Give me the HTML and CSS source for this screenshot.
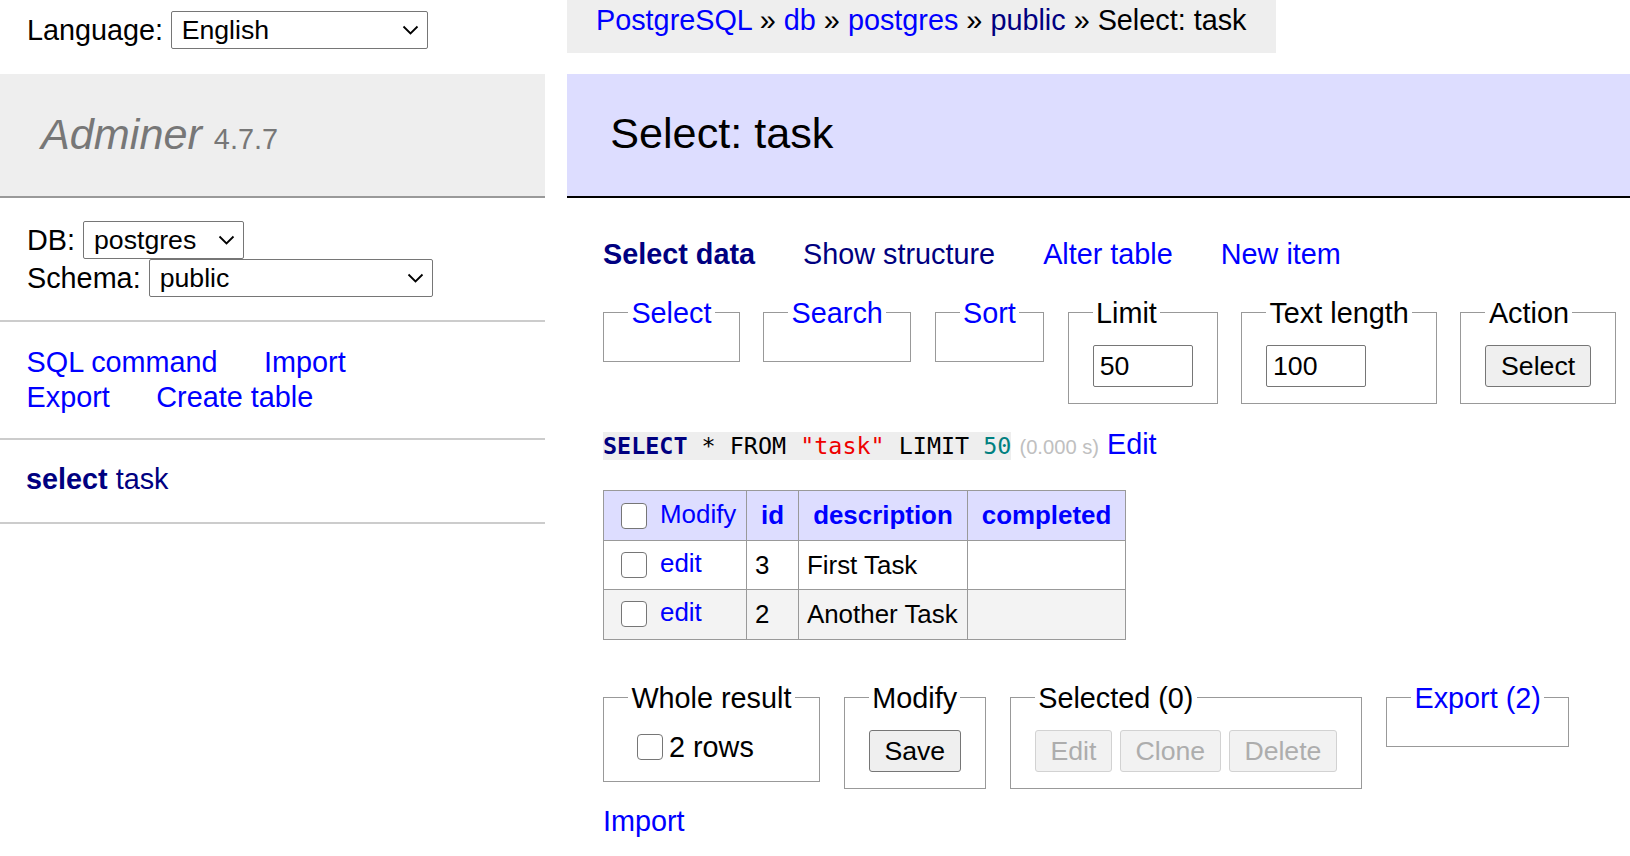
FILE: index.html
```html
<!DOCTYPE html>
<html lang="en">
<head>
<meta charset="utf-8">
<title>Select: task - Adminer</title>
<link rel="stylesheet" href="styles.css">
</head>
<body>
<div class="page">
  <aside class="menu">
    <form class="lang">
      <span class="lbl">Language:</span>
      <span class="select sel-lang"><span class="val">English</span><svg class="chev" width="17" height="10" viewBox="0 0 17 10"><polyline points="1.5,1.5 8.5,8.5 15.5,1.5"/></svg></span>
    </form>
    <h1><a class="logo" href="#">Adminer</a> <span class="version">4.7.7</span></h1>
    <form class="dbs">
      <div class="row"><span class="lbl">DB:</span><span class="select sel-db"><span class="val">postgres</span><svg class="chev" width="17" height="10" viewBox="0 0 17 10"><polyline points="1.5,1.5 8.5,8.5 15.5,1.5"/></svg></span></div>
      <div class="row"><span class="lbl">Schema:</span><span class="select sel-schema"><span class="val">public</span><svg class="chev" width="17" height="10" viewBox="0 0 17 10"><polyline points="1.5,1.5 8.5,8.5 15.5,1.5"/></svg></span></div>
    </form>
    <div class="menu-links">
      <div class="line"><a href="#">SQL command</a><a href="#">Import</a></div>
      <div class="line"><a href="#">Export</a><a href="#">Create table</a></div>
    </div>
    <ul class="tables">
      <li><a class="visited active" href="#">select</a> <a class="visited" href="#">task</a></li>
    </ul>
  </aside>
  <main class="content">
    <div class="breadcrumb"><a href="#">PostgreSQL</a> » <a href="#">db</a> » <a href="#">postgres</a> » <a class="visited" href="#">public</a> » Select: task</div>
    <h2>Select: task</h2>
    <div class="inner">
      <p class="links"><a class="visited active" href="#">Select data</a><a class="visited" href="#">Show structure</a><a href="#">Alter table</a><a href="#">New item</a></p>
      <form class="fs-row top">
        <fieldset><legend><a href="#">Select</a></legend></fieldset>
        <fieldset><legend><a href="#">Search</a></legend></fieldset>
        <fieldset><legend><a href="#">Sort</a></legend></fieldset>
        <fieldset><legend>Limit</legend><input class="txt" type="text" value="50"></fieldset>
        <fieldset><legend>Text length</legend><input class="txt" type="text" value="100"></fieldset>
        <fieldset><legend>Action</legend><button class="btn" type="button">Select</button></fieldset>
      </form>
      <p class="query"><code class="sql"><span class="kw">SELECT</span> * FROM <span class="str">"task"</span> LIMIT <span class="num">50</span></code> <span class="time">(0.000 s)</span> <a href="#">Edit</a></p>
      <table class="data">
        <thead>
          <tr>
            <td class="first"><input class="cb" type="checkbox"> <a href="#">Modify</a></td>
            <th><a href="#">id</a></th>
            <th><a href="#">description</a></th>
            <th><a href="#">completed</a></th>
          </tr>
        </thead>
        <tbody>
          <tr>
            <td class="first"><input class="cb" type="checkbox"> <a href="#">edit</a></td>
            <td>3</td>
            <td>First Task</td>
            <td></td>
          </tr>
          <tr class="odd">
            <td class="first"><input class="cb" type="checkbox"> <a href="#">edit</a></td>
            <td>2</td>
            <td>Another Task</td>
            <td></td>
          </tr>
        </tbody>
      </table>
      <div class="fs-row bottom">
        <fieldset><legend>Whole result</legend><label class="all"><input class="cb" type="checkbox">2 rows</label></fieldset>
        <fieldset><legend>Modify</legend><button class="btn" type="button">Save</button></fieldset>
        <fieldset><legend>Selected (0)</legend><button class="btn" type="button" disabled>Edit</button> <button class="btn" type="button" disabled>Clone</button> <button class="btn" type="button" disabled>Delete</button></fieldset>
        <fieldset><legend><a href="#">Export (2)</a></legend></fieldset>
      </div>
      <p class="import"><a href="#">Import</a></p>
    </div>
  </main>
</div>
</body>
</html>
```
FILE: styles.css
```css
* { box-sizing: border-box; }
html, body { margin: 0; padding: 0; }
body {
  font: 28.8px/36px "Liberation Sans", Arial, sans-serif;
  color: #000;
  background: #fff;
  overflow: hidden;
}
a { color: #00f; text-decoration: none; }
a.visited { color: #000080; }
a.active { font-weight: bold; }

.page { display: flex; align-items: flex-start; }

/* ---------- menu ---------- */
.menu { width: 545px; flex: none; }
.lang {
  height: 60px;
  margin: 0 0 14px;
  padding: 0 27px;
  display: flex;
  align-items: center;
  gap: 7.5px;
}
.select {
  display: inline-flex;
  align-items: center;
  justify-content: space-between;
  height: 37.5px;
  padding: 0 8px 0 10px;
  border: 1px solid #767676;
  border-radius: 2px;
  background: #fff;
  font-size: 26.67px;
  line-height: 30px;
}
.chev { fill: none; stroke: #000; stroke-width: 1.8; flex: none; }
.sel-lang { width: 257px; }
.sel-db { width: 161px; }
.sel-schema { width: 284px; }

h1 {
  margin: 0;
  font-size: 43.2px;
  line-height: 54px;
  font-weight: normal;
  padding: 32.5px 41px 35.5px;
  background: #eee;
  color: #777;
  border-bottom: 2px solid #999;
}
h1 .logo { color: #777; font-style: italic; }
h1 .version { font-size: 28.9px; line-height: 1; color: #777; }

.dbs {
  margin: 0;
  padding: 23px 27px;
  border-bottom: 2px solid #ccc;
}
.dbs .row { display: flex; align-items: center; gap: 8px; height: 38px; }

.menu-links {
  padding: 23px 26.6px;
  border-bottom: 2px solid #ccc;
  line-height: 35px;
}
.menu-links .line { display: flex; gap: 46.5px; }

.tables {
  list-style: none;
  margin: 0;
  padding: 21px 26px 25px;
  border-bottom: 2px solid #ccc;
}

/* ---------- content ---------- */
.content { flex: 1; margin-left: 22px; min-width: 0; }
.breadcrumb {
  display: inline-block;
  height: 53.3px;
  padding: 2px 29px 0;
  background: #eee;
  white-space: nowrap;
}
h2 {
  margin: 20.7px 0 0;
  font-size: 43.2px;
  line-height: 54px;
  font-weight: normal;
  padding: 32.5px 43.2px 35.5px;
  background: #ddf;
  color: #000;
  border-bottom: 2px solid #000;
}
.inner { padding-left: 36px; }
.links { margin: 38px 0 0; display: flex; gap: 48px; }

.fs-row { display: flex; align-items: flex-start; }
.fs-row.top { margin-top: 23px; gap: 23.4px; }
.fs-row.bottom { margin-top: 40px; gap: 24px; }
fieldset {
  margin: 0;
  padding: 14.4px 24px 16px;
  border: 1px solid #999;
  min-width: 0;
}
legend { padding: 0 3.4px; line-height: 36px; }

.txt {
  display: block;
  width: 100px;
  height: 42px;
  margin: 0;
  padding: 0 6px;
  border: 1px solid #767676;
  border-radius: 2px;
  font: 26.67px "Liberation Sans", Arial, sans-serif;
  color: #000;
  background: #fff;
}
.btn {
  height: 42px;
  padding: 0 14.6px;
  border: 1px solid #767676;
  border-radius: 3px;
  background: #efefef;
  color: #000;
  font: 26.67px/1 "Liberation Sans", Arial, sans-serif;
  vertical-align: middle;
}
.btn:disabled { background: #f2f2f2; border-color: #d2d2d2; color: #adadad; }

.query { margin: 22px 0 0; }
.sql {
  font: 23.4px "DejaVu Sans Mono", monospace;
  background: #eee;
}
.sql .kw { font-weight: bold; color: #000080; }
.sql .str { color: #e00; }
.sql .num { color: #008080; }
.time { color: silver; font-size: 20.16px; }

.data {
  margin-top: 25px;
  border-collapse: collapse;
  font-size: 25.92px;
  line-height: 32.4px;
}
.data td, .data th { border: 1px solid #999; padding: 5.2px 7.8px; }
.data td.first { padding-right: 9.8px; }
.data thead td, .data thead th { background: #ddf; }
.data thead th { padding: 5.2px 14px; text-align: center; font-weight: bold; }
.data tbody tr.odd td { background: #f3f3f3; }

.cb {
  -webkit-appearance: none;
  appearance: none;
  width: 26px;
  height: 26px;
  margin: 6px 6px 6px 9px;
  border: 1px solid #767676;
  border-radius: 4px;
  background: #fff;
  vertical-align: middle;
}
.all { display: flex; align-items: center; height: 35px; }
.all .cb { margin: 0 6px 0 9px; }

.import { margin: 14px 0 0; }
```
